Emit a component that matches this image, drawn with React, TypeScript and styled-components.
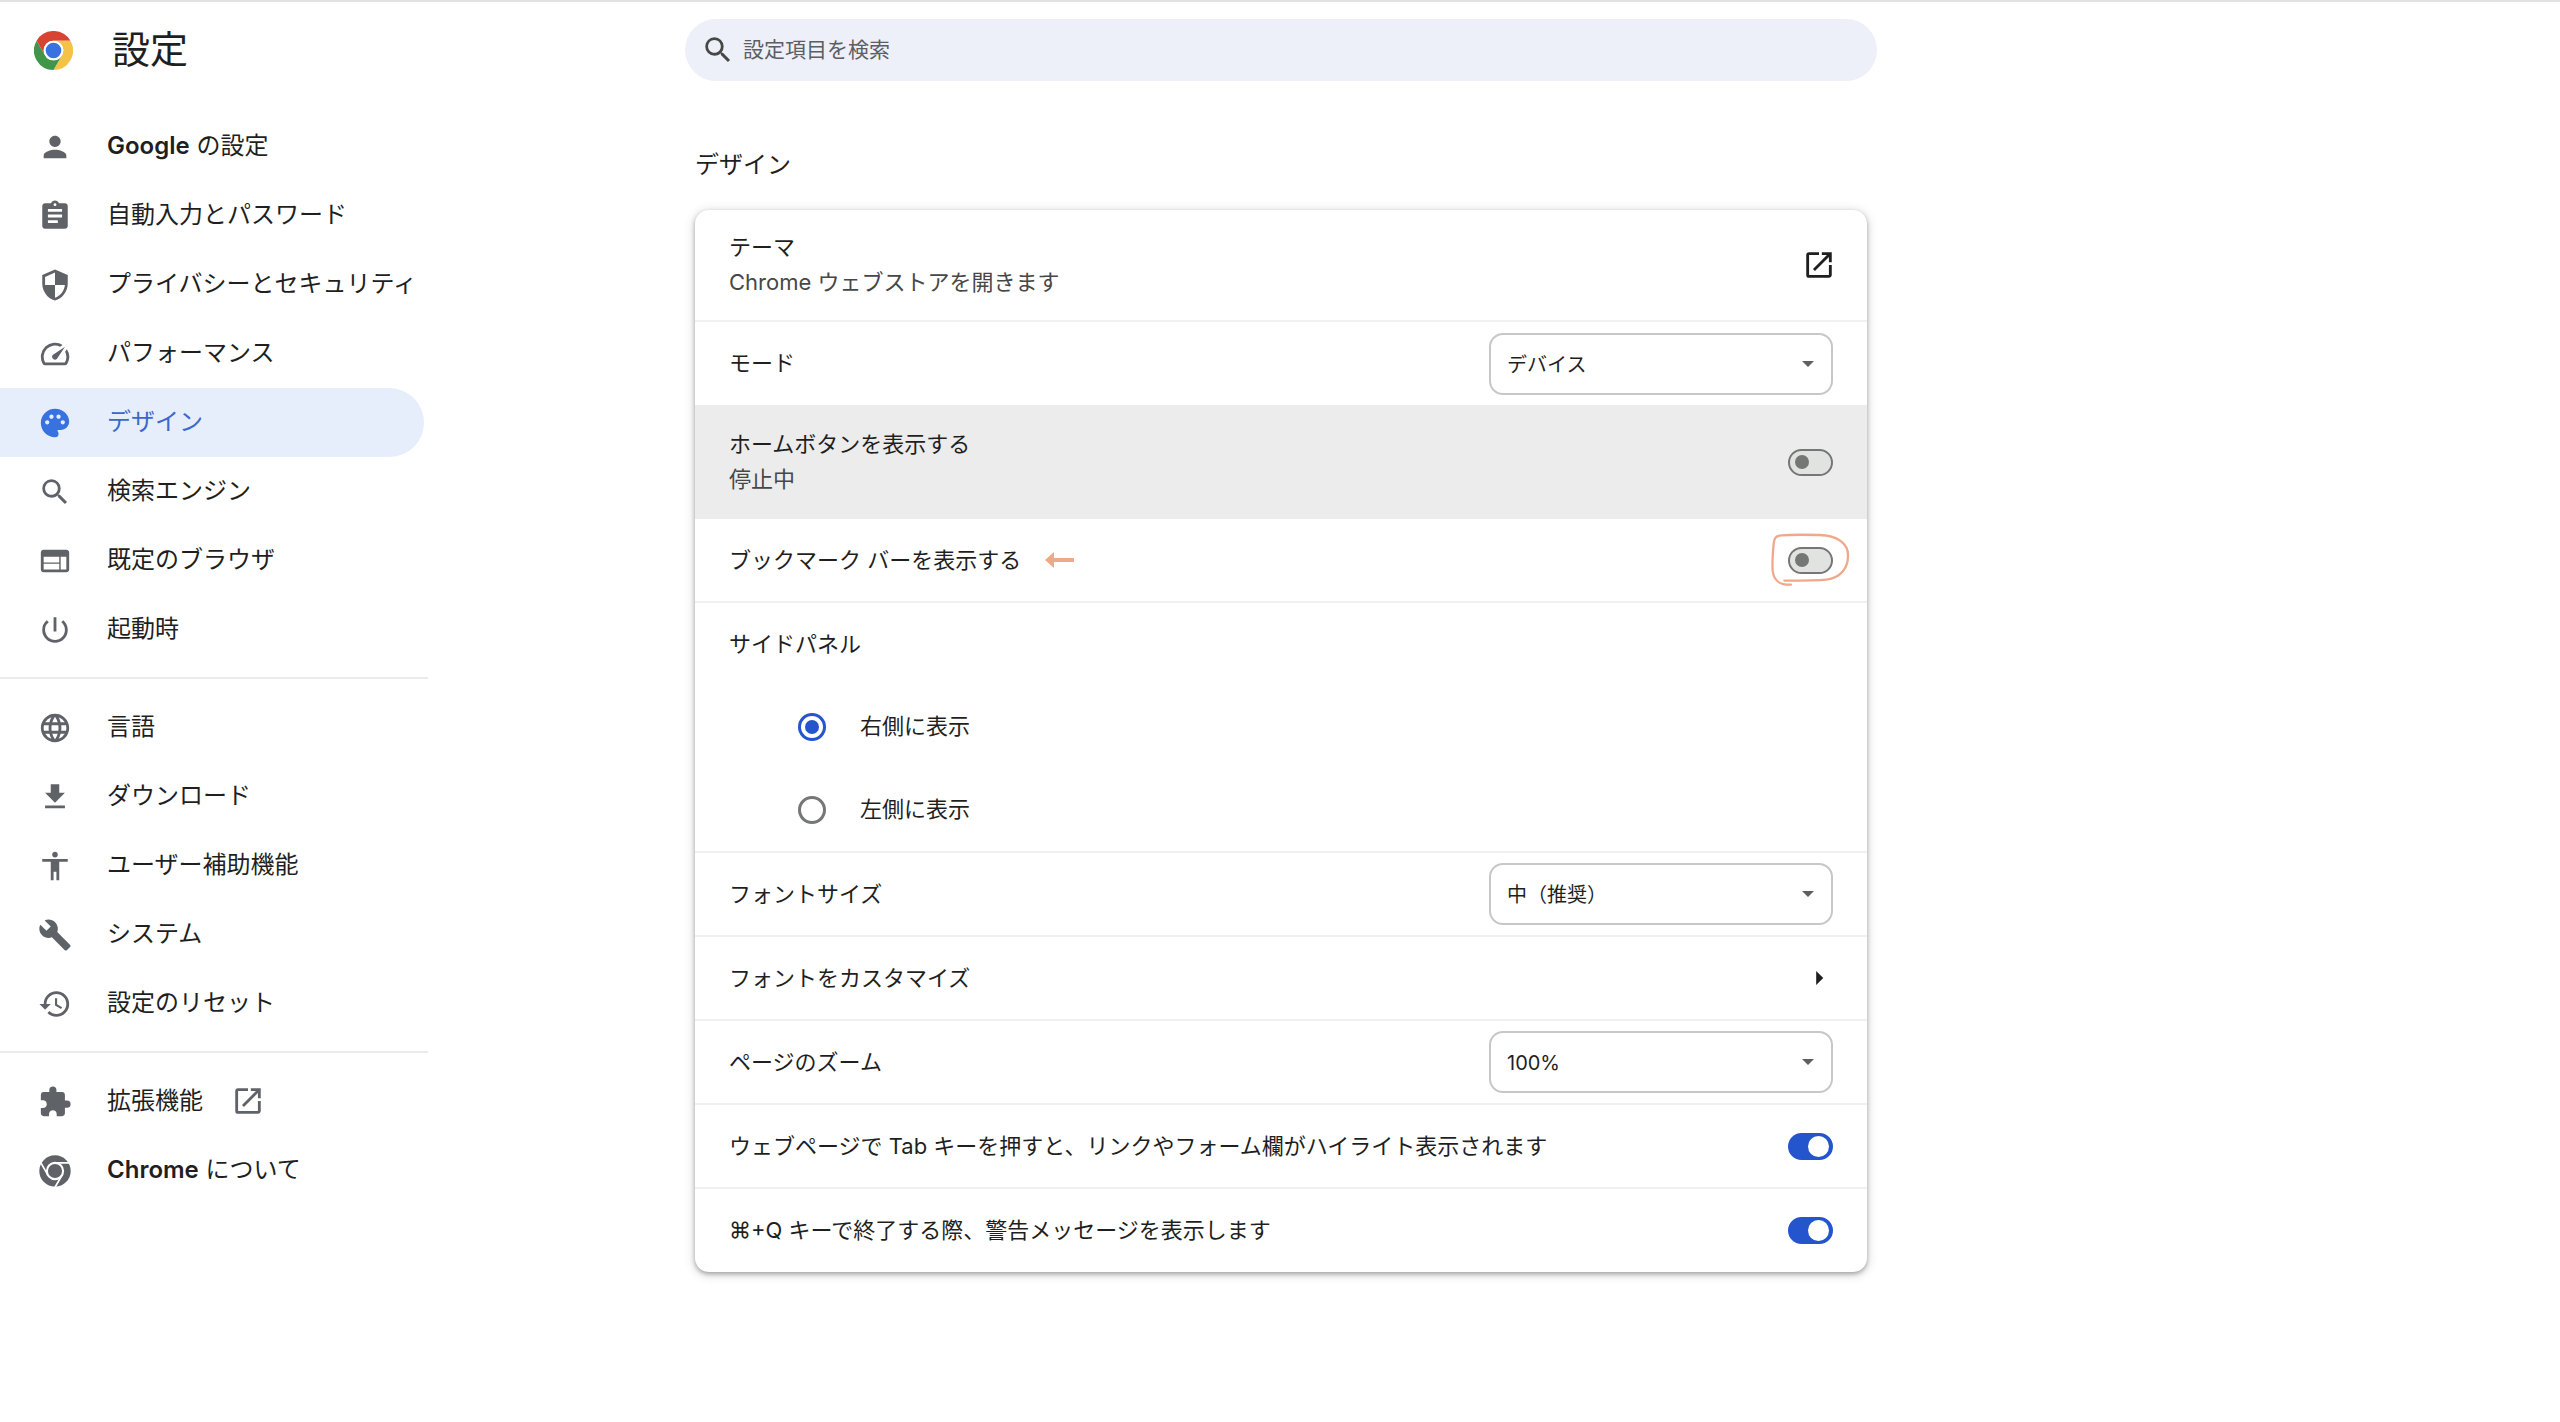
import React, { useState } from 'react';
import styled, { createGlobalStyle, css } from 'styled-components';
import type { IconType } from 'react-icons';
import {
  MdAccessibility,
  MdAssignment,
  MdBuild,
  MdExtension,
  MdFileDownload,
  MdHistory,
  MdLanguage,
  MdOpenInNew,
  MdPalette,
  MdPerson,
  MdPowerSettingsNew,
  MdSearch,
  MdSecurity,
  MdSpeed,
  MdWeb,
} from 'react-icons/md';

const color = {
  text: '#1f1f1f',
  secondary: '#474747',
  icon: '#5f6368',
  accent: '#2455cc',
  selectedBg: '#e7eefb',
  selectedText: '#3b68cc',
  searchBg: '#edf0f9',
  line: '#f0f0f0',
  mark: '#f0a88b',
};

const GlobalStyle = createGlobalStyle`
  *, *::before, *::after { box-sizing: border-box; }
  body {
    margin: 0;
    background: #fff;
    color: ${color.text};
    font-family: Inter, 'Noto Sans CJK JP', sans-serif;
    font-size: 22px;
    line-height: 35px;
  }
  button, input, select { font: inherit; color: inherit; margin: 0; }
`;

/* ---------- page frame ---------- */

const columns = css`
  display: grid;
  grid-template-columns: minmax(428px, calc(50% - 595px)) minmax(0, 1192px) minmax(0, 1fr);
`;

const Page = styled.div`
  min-height: 100vh;
  border-top: 2px solid #e2e2e2;
`;

const Toolbar = styled.header`
  ${columns}
  align-items: center;
  height: 96px;
`;

const Brand = styled.div`
  display: flex;
  align-items: center;
  gap: 39px;
  padding-left: 34px;
`;

const Title = styled.h1`
  margin: 0;
  padding-bottom: 2px;
  font-size: 38px;
  line-height: 48px;
  font-weight: 400;
`;

const SearchBox = styled.label`
  display: flex;
  align-items: center;
  gap: 8px;
  height: 62px;
  padding: 0 16px;
  border-radius: 31px;
  background: ${color.searchBg};
  color: ${color.secondary};
`;

const SearchInput = styled.input`
  flex: 1;
  min-width: 0;
  padding: 0 0 2px;
  border: 0;
  outline: 0;
  background: none;
  font-size: 21px;

  &::placeholder {
    color: #5c5e63;
    opacity: 1;
  }
`;

const Body = styled.div`
  ${columns}
`;

/* ---------- side menu ---------- */

const Menu = styled.nav`
  width: 428px;
  padding-top: 14px;
`;

const MenuGroup = styled.ul`
  list-style: none;
  margin: 0;
  padding: 0;

  & + & {
    margin-top: 13px;
    padding-top: 14px;
    border-top: 2px solid #ebebeb;
  }
`;

const MenuLink = styled.a<{ $selected?: boolean }>`
  display: flex;
  align-items: center;
  gap: 35px;
  height: 69px;
  margin-right: 4px;
  padding-left: 38px;
  border-radius: 0 35px 35px 0;
  background: ${(p) => (p.$selected ? color.selectedBg : 'transparent')};
  color: ${(p) => (p.$selected ? color.selectedText : color.text)};
  font-size: 24px;
  text-decoration: none;

  svg {
    flex: none;
    color: ${(p) => (p.$selected ? '#3871e0' : color.icon)};
  }
`;

const MenuText = styled.span`
  display: flex;
  align-items: center;
  gap: 28px;
  padding-bottom: 2px;
`;

const Latin = styled.b`
  font-weight: 600;
`;

/* ---------- settings card ---------- */

const Main = styled.main`
  padding: 49px 10px 0;
`;

const SectionTitle = styled.h2`
  margin: 0 0 27px;
  font-size: 24px;
  line-height: 36px;
  font-weight: 400;
`;

const Card = styled.section`
  overflow: hidden;
  border-radius: 14px;
  background: #fff;
  box-shadow: 0 2px 4px rgba(60, 64, 67, 0.4), 0 2px 10px 2px rgba(60, 64, 67, 0.16);
`;

const Row = styled.div<{ $tall?: boolean; $hover?: boolean; $line?: boolean }>`
  display: flex;
  align-items: center;
  justify-content: space-between;
  gap: 34px;
  min-height: ${(p) => (p.$hover ? 114 : p.$tall ? 112 : p.$line ? 84 : 83)}px;
  padding: 0 34px;
  background: ${(p) => (p.$hover ? '#ececec' : 'transparent')};
  border-bottom: ${(p) => (p.$line ? `2px solid ${color.line}` : '0')};
`;

const RowLabel = styled.label`
  display: flex;
  flex-direction: column;
`;

const RowNote = styled.span`
  color: ${color.secondary};
`;

const Marked = styled.div`
  display: flex;
  align-items: center;
  gap: 24px;
`;

const IconButton = styled.button`
  display: flex;
  margin-right: -3px;
  padding: 0;
  border: 0;
  background: none;
`;

const SelectWrap = styled.div`
  position: relative;
  width: 344px;
`;

const Select = styled.select`
  appearance: none;
  display: block;
  width: 100%;
  height: 62px;
  padding: 3px 48px 0 16px;
  border: 2px solid #c7c7c7;
  border-radius: 14px;
  background: #fff;
  font-size: 20px;
`;

const SelectArrow = styled.svg`
  position: absolute;
  right: 19px;
  top: 28px;
  pointer-events: none;
`;

const Switch = styled.input`
  appearance: none;
  display: flex;
  align-items: center;
  flex: none;
  width: 45px;
  height: 27px;
  padding: 0 5px;
  border: 2px solid #747775;
  border-radius: 14px;
  background: #e1e3e1;

  &::before {
    content: '';
    width: 14px;
    height: 14px;
    border-radius: 50%;
    background: #747775;
  }

  &:checked {
    justify-content: flex-end;
    padding: 0 2px;
    border-color: ${color.accent};
    background: ${color.accent};
  }

  &:checked::before {
    width: 21px;
    height: 21px;
    background: #fff;
  }
`;

const Circled = styled.div`
  position: relative;
  display: flex;
`;

const HandCircle = styled.svg`
  position: absolute;
  left: -18px;
  top: -17px;
  pointer-events: none;
`;

const RadioSection = styled.fieldset`
  margin: 0;
  padding: 0 34px;
  border: 0;
  border-bottom: 2px solid ${color.line};
`;

const RadioTitle = styled.legend`
  display: flex;
  align-items: center;
  height: 82px;
  padding: 0;
`;

const RadioRow = styled.label`
  display: flex;
  align-items: center;
  gap: 34px;
  height: 83px;
  padding-left: 69px;
`;

const Radio = styled.input`
  appearance: none;
  display: grid;
  place-items: center;
  width: 28px;
  height: 28px;
  border: 3px solid #747775;
  border-radius: 50%;

  &:checked {
    border-color: ${color.accent};
  }

  &:checked::before {
    content: '';
    width: 14px;
    height: 14px;
    border-radius: 50%;
    background: ${color.accent};
  }
`;

/* ---------- drawings ---------- */

const ChromeLogo = () => (
  <svg width="39" height="39" viewBox="0 0 48 48" aria-hidden="true">
    <path fill="#d84434" d="M3.2 12A24 24 0 0 1 44.8 12H24A12 12 0 0 0 13.6 30Z" />
    <path fill="#f5c248" d="M44.8 12A24 24 0 0 1 24 48L34.4 30A12 12 0 0 0 24 12Z" />
    <path fill="#3f9649" d="M3.2 12A24 24 0 0 0 24 48L34.4 30A12 12 0 0 1 13.6 30Z" />
    <circle cx="24" cy="24" r="12" fill="#fff" />
    <circle cx="24" cy="24" r="9.6" fill="#3871e0" />
  </svg>
);

const ChromeMono = () => (
  <svg width="34" height="34" viewBox="-2 -2 52 52" aria-hidden="true">
    <circle cx="24" cy="24" r="24" fill="currentColor" />
    <g stroke="#fff" strokeWidth="2.6" fill="none">
      <circle cx="24" cy="24" r="12.4" strokeWidth="3.2" />
      <path d="M24 11.6H46M13.2 30.2L2.2 11.2M34.8 30.2L23.8 49.2" />
    </g>
  </svg>
);

const ArrowMark = () => (
  <svg width="29" height="18" viewBox="0 0 29 18" aria-hidden="true">
    <path d="M0 9L9 1V17Z" fill={color.mark} />
    <path d="M7 9H29" stroke={color.mark} strokeWidth="4" />
  </svg>
);

const CircleMark = () => (
  <HandCircle width="83" height="58" viewBox="990 1050 250 175" aria-hidden="true">
    <path
      d="M1033 1203C1090 1203 1130 1203 1160 1200C1202 1195 1225 1165 1225 1130C1228 1090 1190 1066 1140 1065C1095 1064 1050 1064 1025 1066C1005 1068 1003 1075 1001 1090C998 1120 996 1150 998 1175C1002 1205 1020 1216 1053 1215"
      fill="none"
      stroke={color.mark}
      strokeWidth="7"
      strokeLinecap="round"
    />
  </HandCircle>
);

/* ---------- parts ---------- */

interface MenuEntry {
  icon: IconType | (() => React.JSX.Element);
  latin?: string;
  text: string;
  external?: boolean;
}

const menu: MenuEntry[][] = [
  [
    { icon: MdPerson, latin: 'Google', text: ' の設定' },
    { icon: MdAssignment, text: '自動入力とパスワード' },
    { icon: MdSecurity, text: 'プライバシーとセキュリティ' },
    { icon: MdSpeed, text: 'パフォーマンス' },
    { icon: MdPalette, text: 'デザイン' },
    { icon: MdSearch, text: '検索エンジン' },
    { icon: MdWeb, text: '既定のブラウザ' },
    { icon: MdPowerSettingsNew, text: '起動時' },
  ],
  [
    { icon: MdLanguage, text: '言語' },
    { icon: MdFileDownload, text: 'ダウンロード' },
    { icon: MdAccessibility, text: 'ユーザー補助機能' },
    { icon: MdBuild, text: 'システム' },
    { icon: MdHistory, text: '設定のリセット' },
  ],
  [
    { icon: MdExtension, text: '拡張機能', external: true },
    { icon: ChromeMono, latin: 'Chrome', text: ' について' },
  ],
];

const SelectField = ({ id, options }: { id: string; options: string[] }) => (
  <SelectWrap>
    <Select id={id}>
      {options.map((o) => (
        <option key={o}>{o}</option>
      ))}
    </Select>
    <SelectArrow width="12" height="6" viewBox="0 0 12 6" aria-hidden="true">
      <path d="M0 0H12L6 6Z" fill="#5f5f5f" />
    </SelectArrow>
  </SelectWrap>
);

const Toggle = ({ id, on = false }: { id: string; on?: boolean }) => {
  const [checked, setChecked] = useState(on);
  return (
    <Switch
      id={id}
      type="checkbox"
      role="switch"
      checked={checked}
      onChange={(e) => setChecked(e.target.checked)}
    />
  );
};

export default function App() {
  return (
    <Page lang="ja">
      <GlobalStyle />
      <Toolbar>
        <Brand>
          <ChromeLogo />
          <Title>設定</Title>
        </Brand>
        <SearchBox>
          <MdSearch size={34} aria-hidden="true" />
          <SearchInput type="text" placeholder="設定項目を検索" aria-label="設定項目を検索" />
        </SearchBox>
      </Toolbar>

      <Body>
        <Menu>
          {menu.map((group, i) => (
            <MenuGroup key={i}>
              {group.map(({ icon: Icon, latin, text, external }) => (
                <li key={text}>
                  <MenuLink href="#" $selected={text === 'デザイン'}>
                    <Icon size={34} />
                    <MenuText>
                      <span>
                        {latin && <Latin>{latin}</Latin>}
                        {text}
                      </span>
                      {external && <MdOpenInNew size={34} />}
                    </MenuText>
                  </MenuLink>
                </li>
              ))}
            </MenuGroup>
          ))}
        </Menu>

        <Main>
          <SectionTitle>デザイン</SectionTitle>
          <Card>
            <Row $tall $line>
              <RowLabel htmlFor="theme">
                <span>テーマ</span>
                <RowNote>Chrome ウェブストアを開きます</RowNote>
              </RowLabel>
              <IconButton id="theme">
                <MdOpenInNew size={34} />
              </IconButton>
            </Row>
            <Row>
              <RowLabel htmlFor="mode">モード</RowLabel>
              <SelectField id="mode" options={['デバイス']} />
            </Row>
            <Row $hover>
              <RowLabel htmlFor="home">
                <span>ホームボタンを表示する</span>
                <RowNote>停止中</RowNote>
              </RowLabel>
              <Toggle id="home" />
            </Row>
            <Row $line>
              <Marked>
                <RowLabel htmlFor="bookmarks">ブックマーク バーを表示する</RowLabel>
                <ArrowMark />
              </Marked>
              <Circled>
                <Toggle id="bookmarks" />
                <CircleMark />
              </Circled>
            </Row>
            <RadioSection>
              <RadioTitle>サイドパネル</RadioTitle>
              <RadioRow>
                <Radio type="radio" name="panel" defaultChecked />
                右側に表示
              </RadioRow>
              <RadioRow>
                <Radio type="radio" name="panel" />
                左側に表示
              </RadioRow>
            </RadioSection>
            <Row $line>
              <RowLabel htmlFor="font-size">フォントサイズ</RowLabel>
              <SelectField id="font-size" options={['中（推奨）']} />
            </Row>
            <Row $line>
              <RowLabel htmlFor="fonts">フォントをカスタマイズ</RowLabel>
              <IconButton id="fonts">
                <svg width="34" height="34" viewBox="0 0 24 24" aria-hidden="true">
                  <path d="M10 7l5 5-5 5z" fill="currentColor" />
                </svg>
              </IconButton>
            </Row>
            <Row $line>
              <RowLabel htmlFor="zoom">ページのズーム</RowLabel>
              <SelectField id="zoom" options={['100%']} />
            </Row>
            <Row $line>
              <RowLabel htmlFor="tab-key">
                ウェブページで Tab キーを押すと、リンクやフォーム欄がハイライト表示されます
              </RowLabel>
              <Toggle id="tab-key" on />
            </Row>
            <Row>
              <RowLabel htmlFor="quit">⌘+Q キーで終了する際、警告メッセージを表示します</RowLabel>
              <Toggle id="quit" on />
            </Row>
          </Card>
        </Main>
      </Body>
    </Page>
  );
}
